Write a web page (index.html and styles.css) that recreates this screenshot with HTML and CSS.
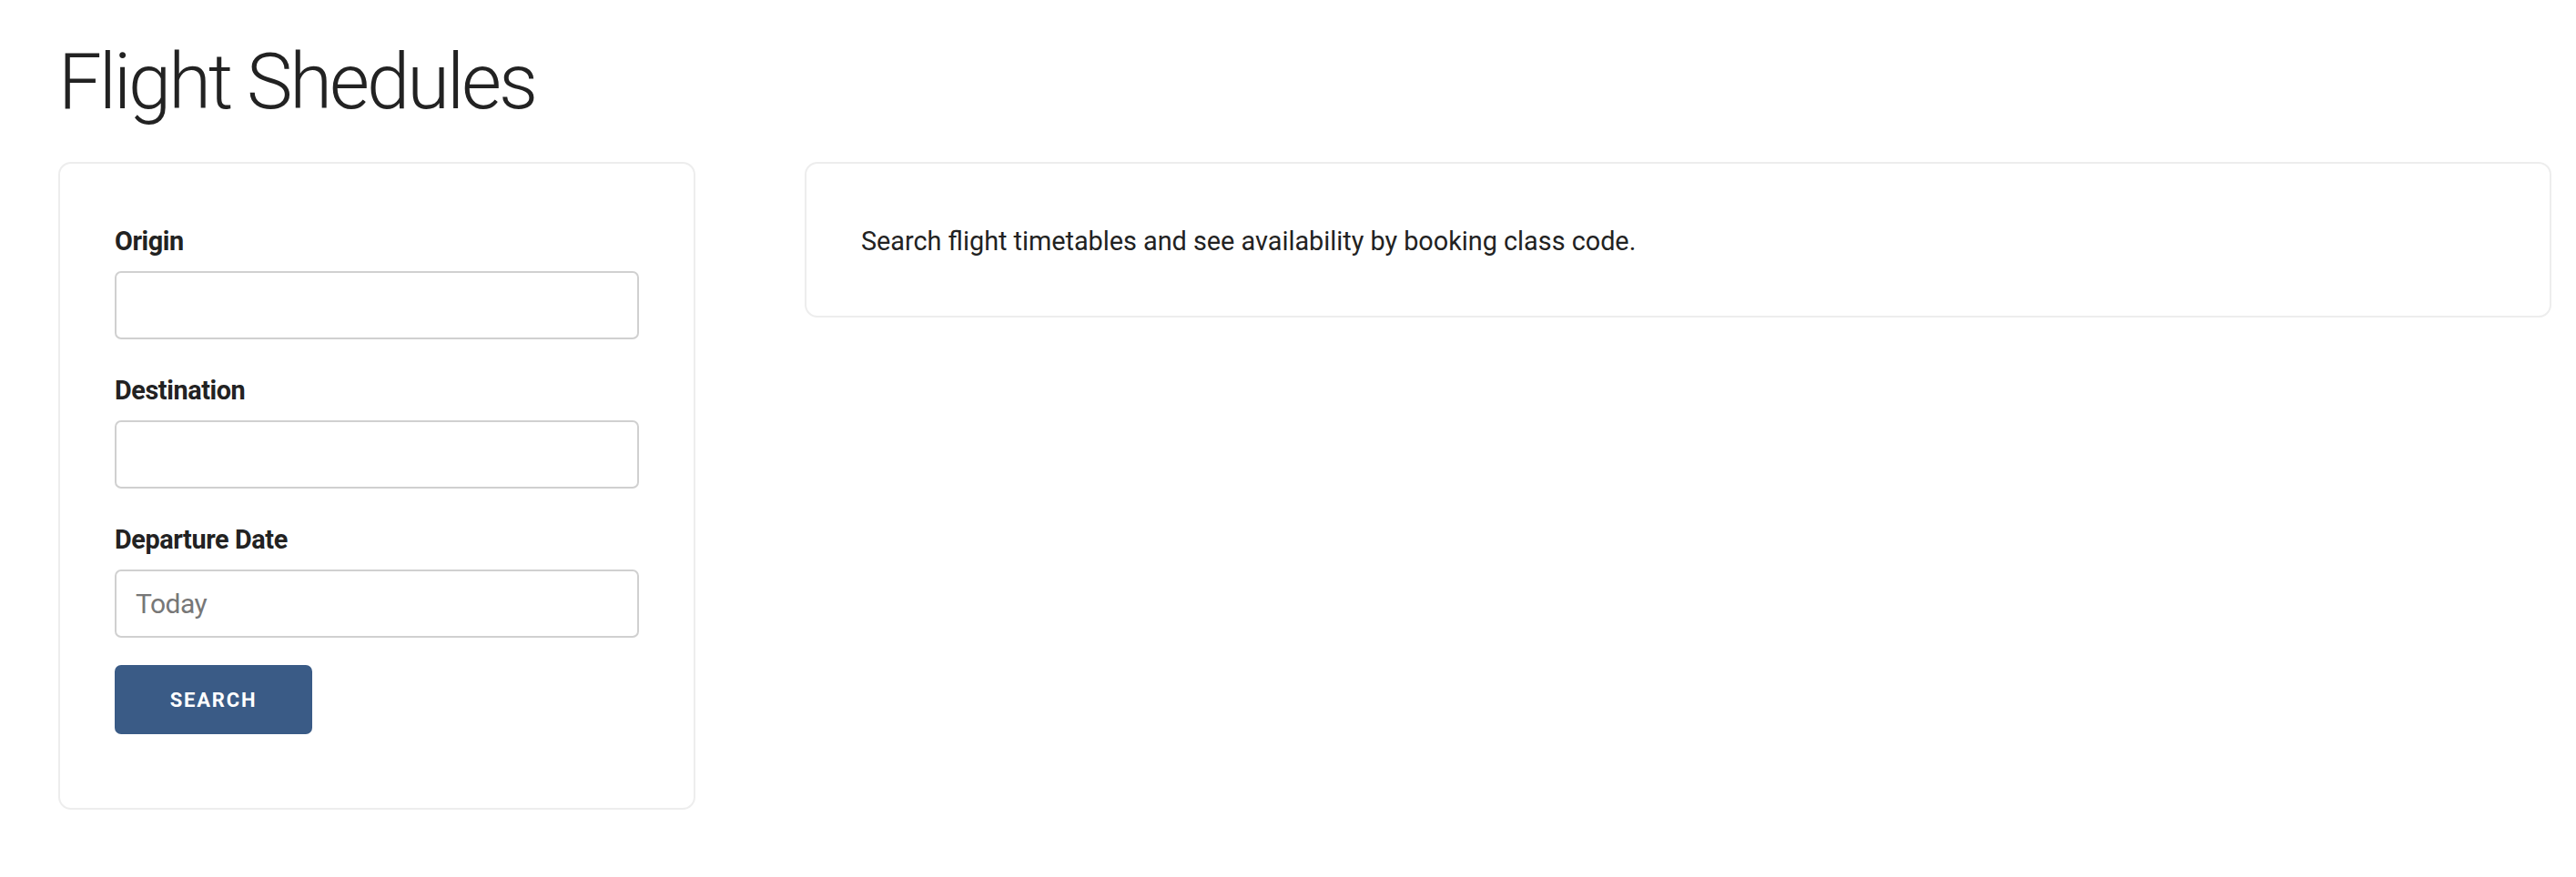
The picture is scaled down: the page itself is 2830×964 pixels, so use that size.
FILE: index.html
```html
<!DOCTYPE html>
<html lang="en">
<head>
<meta charset="utf-8">
<title>Flight Shedules</title>
<link rel="stylesheet" href="styles.css">
</head>
<body>
<main class="page">
  <h1 class="page-title">Flight Shedules</h1>
  <div class="layout">
    <section class="card search-card">
      <form class="search-form">
        <div class="field">
          <label class="field-label" for="origin">Origin</label>
          <input class="field-input" id="origin" type="text">
        </div>
        <div class="field">
          <label class="field-label" for="destination">Destination</label>
          <input class="field-input" id="destination" type="text">
        </div>
        <div class="field field-last">
          <label class="field-label" for="date">Departure Date</label>
          <input class="field-input" id="date" type="text" placeholder="Today">
        </div>
        <button class="search-btn" type="button">SEARCH</button>
      </form>
    </section>
    <section class="card info-card">
      <p class="info-text">Search flight timetables and see availability by booking class code.</p>
    </section>
  </div>
</main>
</body>
</html>
```
FILE: styles.css
```css
* { box-sizing: border-box; }
html, body {
  margin: 0;
  padding: 0;
  background: #ffffff;
}
body {
  font-family: Roboto, "Noto Sans", "Liberation Sans", sans-serif;
  color: #222222;
}
.page {
  padding: 39px 27px 0 64px;
}
.page-title {
  margin: 0 0 37px 0;
  font-size: 85px;
  line-height: 1.2;
  font-weight: 300;
  letter-spacing: -3px;
  color: #222222;
}
.layout {
  display: flex;
  align-items: flex-start;
  gap: 120px;
}
.card {
  background: #ffffff;
  border: 2px solid #ededed;
  border-radius: 14px;
}
.search-card {
  width: 700px;
  flex: 0 0 700px;
  padding: 64px 60px 81px 60px;
}
.info-card {
  flex: 1 1 auto;
  padding: 62px 60px 59px 60px;
}
.search-form {
  display: flex;
  flex-direction: column;
}
.field {
  display: flex;
  flex-direction: column;
  margin-bottom: 35px;
}
.field-last {
  margin-bottom: 30px;
}
.field-label {
  font-size: 28.8px;
  line-height: 43px;
  font-weight: 700;
  letter-spacing: -0.4px;
  margin-bottom: 11px;
  color: #222222;
}
.field-input {
  height: 75px;
  width: 100%;
  border: 2px solid #d0d0d0;
  border-radius: 7px;
  padding: 0 21px;
  font-family: Roboto, "Noto Sans", sans-serif;
  font-size: 30px;
  color: #222222;
  background: #ffffff;
  outline: none;
}
.field-input::placeholder {
  color: #777777;
  letter-spacing: -0.5px;
}
.search-btn {
  align-self: flex-start;
  width: 217px;
  height: 76px;
  border: none;
  border-radius: 7px;
  background: #3a5b86;
  color: #ffffff;
  font-family: Roboto, "Noto Sans", sans-serif;
  font-size: 22px;
  font-weight: 700;
  letter-spacing: 1.8px;
  padding: 0;
  cursor: pointer;
}
.info-text {
  margin: 0;
  font-size: 28.8px;
  line-height: 46px;
  letter-spacing: 0;
  color: #222222;
}
```
